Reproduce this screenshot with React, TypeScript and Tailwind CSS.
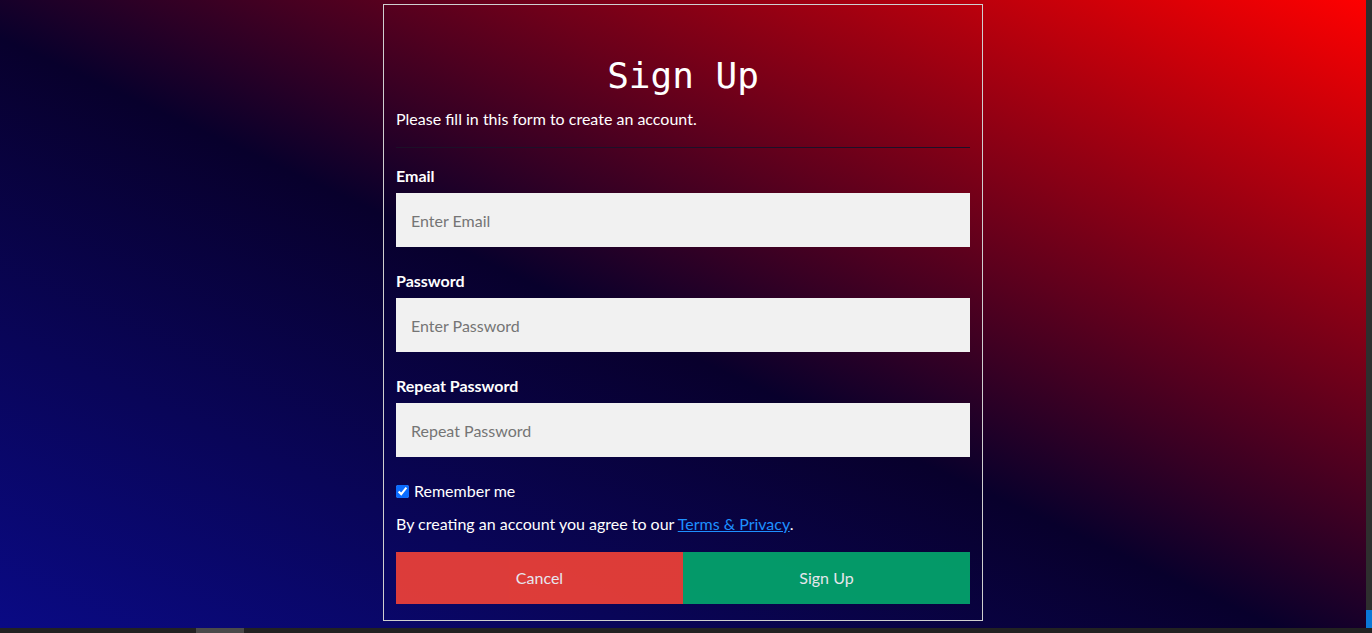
import React from 'react';

const sans = "font-['Lato','Noto_Sans',sans-serif]";

function Field({ label, placeholder, type }: { label: string; placeholder: string; type: string }) {
  return (
    <div className="flex flex-col">
      <label className="text-[16px] font-bold leading-[22px] text-white">{label}</label>
      <input
        type={type}
        placeholder={placeholder}
        className="mt-[6px] mb-[23px] h-[54px] w-full bg-[#f1f1f1] px-[15px] text-[16px] text-black outline-none placeholder:text-[#757575]"
      />
    </div>
  );
}

export default function App() {
  return (
    <div className={`relative h-[633px] w-full overflow-hidden bg-[linear-gradient(to_top_right,#0a0a85_0%,#08002c_47%,#ff0000_100%)] ${sans}`}>
      <div className="flex justify-center pr-[6px] pt-[4px]">
        {/* Form card */}
        <form className="w-[600px] border border-[#cfcfcf] px-[12px] pb-[16px] pt-[46px]">
          <h1 className="text-center font-['DejaVu_Sans_Mono',monospace] text-[36px] leading-[50px] text-white">Sign Up</h1>
          <p className="mt-[7px] text-[16px] leading-[22px] text-white">Please fill in this form to create an account.</p>
          <hr className="mt-[17px] mb-[17px] border-0 border-t border-[#1c1028]" />

          <Field label="Email" placeholder="Enter Email" type="text" />
          <Field label="Password" placeholder="Enter Password" type="password" />
          <Field label="Repeat Password" placeholder="Repeat Password" type="password" />

          <label className="flex h-[22px] items-center gap-[5px] text-[16px] text-white">
            <input type="checkbox" defaultChecked className="h-[13px] w-[13px] accent-[#0b6cff]" />
            Remember me
          </label>

          <p className="mt-[11px] text-[16px] leading-[22px] text-white">
            By creating an account you agree to our{' '}
            <a href="#" className="text-[#1e90ff] underline">Terms &amp; Privacy</a>.
          </p>

          <div className="mt-[17px] flex">
            <button type="button" className="h-[52px] flex-1 bg-[#f44336] text-[16px] text-white opacity-90">Cancel</button>
            <button type="submit" className="h-[52px] flex-1 bg-[#04aa6d] text-[16px] text-white opacity-90">Sign Up</button>
          </div>
        </form>
      </div>

      {/* scrollbar strips */}
      <div className="absolute bottom-0 left-0 right-0 h-[5px] bg-[#222]">
        <div className="ml-[196px] h-full w-[48px] bg-[#4a4a4a]" />
      </div>
      <div className="absolute right-0 top-0 bottom-[5px] flex w-[6px] flex-col justify-end bg-[#2e2e2e]">
        <div className="h-[18px] bg-[#0a78d7]" />
      </div>
    </div>
  );
}
